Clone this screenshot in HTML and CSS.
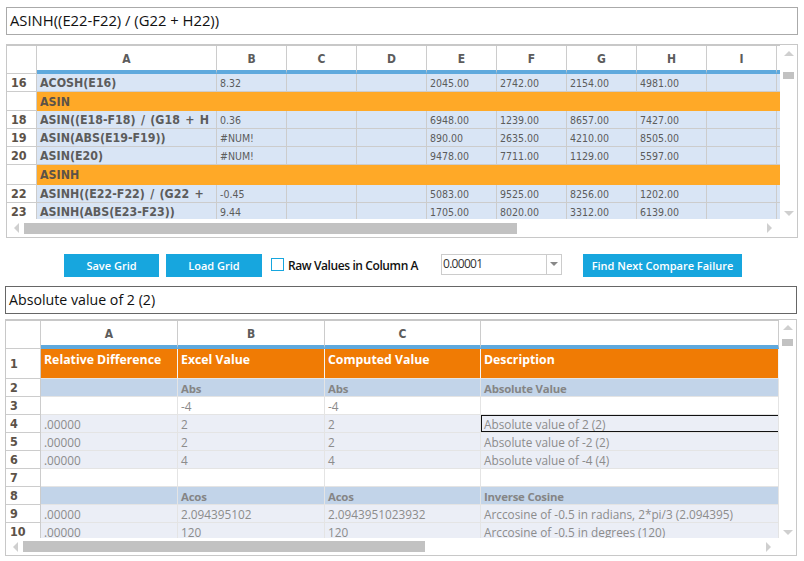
FILE: index.html
```html
<!DOCTYPE html>
<html>
<head>
    <meta charset="UTF-8">
    <title>Compare Grid</title>
    <link rel="stylesheet" href="styles.css">
</head>
<body>
    <div class="page">
        <div class="formula formula-top">ASINH((E22-F22) / (G22 + H22))</div>

        <div class="grid grid-top">
            <div class="view">
                <table class="sheet sheet-top">
                    <colgroup>
                        <col class="c-head"><col class="c-a"><col class="c-n"><col class="c-n"><col class="c-n"><col class="c-n"><col class="c-n"><col class="c-n"><col class="c-n"><col class="c-n"><col class="c-n">
                    </colgroup>
                    <thead>
                        <tr><th class="corner"></th><th>A</th><th>B</th><th>C</th><th>D</th><th>E</th><th>F</th><th>G</th><th>H</th><th>I</th><th></th></tr>
                    </thead>
                    <tbody>
                        <tr class="row first"><td class="num">16</td><td class="name"><span>ACOSH(E16)</span></td><td>8.32</td><td></td><td></td><td>2045.00</td><td>2742.00</td><td>2154.00</td><td>4981.00</td><td></td><td></td></tr>
                        <tr class="section"><td class="num"></td><td colspan="10">ASIN</td></tr>
                        <tr class="row"><td class="num">18</td><td class="name"><span>ASIN((E18-F18) / (G18 + H</span></td><td>0.36</td><td></td><td></td><td>6948.00</td><td>1239.00</td><td>8657.00</td><td>7427.00</td><td></td><td></td></tr>
                        <tr class="row"><td class="num">19</td><td class="name"><span>ASIN(ABS(E19-F19))</span></td><td>#NUM!</td><td></td><td></td><td>890.00</td><td>2635.00</td><td>4210.00</td><td>8505.00</td><td></td><td></td></tr>
                        <tr class="row"><td class="num">20</td><td class="name"><span>ASIN(E20)</span></td><td>#NUM!</td><td></td><td></td><td>9478.00</td><td>7711.00</td><td>1129.00</td><td>5597.00</td><td></td><td></td></tr>
                        <tr class="section tall"><td class="num"></td><td colspan="10">ASINH</td></tr>
                        <tr class="row"><td class="num">22</td><td class="name"><span>ASINH((E22-F22) / (G22 +</span></td><td>-0.45</td><td></td><td></td><td>5083.00</td><td>9525.00</td><td>8256.00</td><td>1202.00</td><td></td><td></td></tr>
                        <tr class="row"><td class="num">23</td><td class="name"><span>ASINH(ABS(E23-F23))</span></td><td>9.44</td><td></td><td></td><td>1705.00</td><td>8020.00</td><td>3312.00</td><td>6139.00</td><td></td><td></td></tr>
                    </tbody>
                </table>
            </div>
            <div class="vbar">
                <i class="arrow up"></i>
                <i class="vthumb"></i>
                <i class="arrow down"></i>
            </div>
            <div class="hbar">
                <i class="arrow left"></i>
                <i class="hthumb"></i>
                <i class="arrow right"></i>
            </div>
            <div class="bar-corner"></div>
        </div>

        <div class="toolbar">
            <button class="btn btn-save">Save Grid</button>
            <button class="btn btn-load">Load Grid</button>
            <label class="check"><i class="box"></i>Raw Values in Column A</label>
            <div class="combo">
                <span class="combo-text">0.00001</span>
                <span class="combo-btn"><i class="arrow down"></i></span>
            </div>
            <button class="btn btn-find">Find Next Compare Failure</button>
        </div>

        <div class="formula formula-bottom">Absolute value of 2 (2)</div>

        <div class="grid grid-bottom">
            <div class="view">
                <table class="sheet sheet-bottom">
                    <colgroup>
                        <col class="d-head"><col class="d-a"><col class="d-b"><col class="d-c"><col class="d-d">
                    </colgroup>
                    <thead>
                        <tr><th class="corner"></th><th>A</th><th>B</th><th>C</th><th></th></tr>
                    </thead>
                    <tbody>
                        <tr class="title"><td class="num">1</td><td>Relative Difference</td><td>Excel Value</td><td>Computed Value</td><td>Description</td></tr>
                        <tr class="group"><td class="num">2</td><td></td><td>Abs</td><td>Abs</td><td>Absolute Value</td></tr>
                        <tr class="plain"><td class="num">3</td><td></td><td>-4</td><td>-4</td><td></td></tr>
                        <tr class="data"><td class="num">4</td><td>.00000</td><td>2</td><td>2</td><td class="active">Absolute value of 2 (2)</td></tr>
                        <tr class="data"><td class="num">5</td><td>.00000</td><td>2</td><td>2</td><td>Absolute value of -2 (2)</td></tr>
                        <tr class="data"><td class="num">6</td><td>.00000</td><td>4</td><td>4</td><td>Absolute value of -4 (4)</td></tr>
                        <tr class="plain"><td class="num">7</td><td></td><td></td><td></td><td></td></tr>
                        <tr class="group"><td class="num">8</td><td></td><td>Acos</td><td>Acos</td><td>Inverse Cosine</td></tr>
                        <tr class="data"><td class="num">9</td><td>.00000</td><td>2.094395102</td><td>2.0943951023932</td><td>Arccosine of -0.5 in radians, 2*pi/3 (2.094395)</td></tr>
                        <tr class="data"><td class="num">10</td><td>.00000</td><td>120</td><td>120</td><td>Arccosine of -0.5 in degrees (120)</td></tr>
                    </tbody>
                </table>
            </div>
            <div class="vbar">
                <i class="arrow up"></i>
                <i class="vthumb"></i>
                <i class="arrow down"></i>
            </div>
            <div class="hbar">
                <i class="arrow left"></i>
                <i class="hthumb"></i>
                <i class="arrow right"></i>
            </div>
            <div class="bar-corner"></div>
        </div>
    </div>
</body>
</html>
```

FILE: styles.css
```css
* {
    box-sizing: border-box;
}
html, body {
    margin: 0;
    height: 100%;
    background: white;
}
body {
    font-family: "Open Sans", "Noto Sans", sans-serif;
    color: #222;
}
.page {
    width: 804px;
    padding-top: 7px;
}
.formula {
    height: 28px;
    line-height: 25px;
    padding-left: 3px;
    background: white;
    color: #111;
    white-space: nowrap;
}
.formula-top {
    margin-left: 6px;
    width: 792px;
    border: 1px solid #aaa;
    font-size: 14.8px;
}
.formula-bottom {
    margin-left: 5px;
    margin-top: 9px;
    width: 792px;
    border: 1px solid #666;
    font-size: 14.2px;
}

/* grids */
.grid {
    display: grid;
    background: white;
    border: 1px solid #c8c8c8;
}
.grid-top {
    margin-left: 6px;
    margin-top: 9px;
    width: 792px;
    height: 194px;
    grid-template-columns: 773px 17px;
    grid-template-rows: 174px 18px;
}
.grid-bottom {
    margin-left: 5px;
    margin-top: 5px;
    width: 792px;
    height: 237px;
    grid-template-columns: 773px 17px;
    grid-template-rows: 218px 17px;
}
.view {
    overflow: hidden;
    border-top: 1px solid #c8c8c8;
}
.sheet {
    border-collapse: separate;
    border-spacing: 0;
    table-layout: fixed;
    width: 100%;
}
.sheet th, .sheet td {
    padding: 0;
    overflow: hidden;
    white-space: nowrap;
}
.sheet th {
    background: white;
    color: #5c5c5c;
    text-align: center;
    border-right: 1px solid #ccc;
    border-bottom: 4px solid #5fa9dd;
    padding-top: 1px;
    font-family: "DejaVu Sans Condensed", sans-serif;
    font-weight: bold;
    font-size: 12px;
}
.sheet th.corner {
    border-bottom: 1px solid #ccc;
}
.num {
    background: white;
    color: #5c5248;
    font-family: "DejaVu Sans Condensed", sans-serif;
    font-weight: bold;
    font-size: 12.5px;
    padding-left: 4px !important;
    border-right: 1px solid #ccc;
    border-bottom: 1px solid #ccc;
}

/* top sheet */
.sheet-top {
    width: 773px;
}
.c-head { width: 30px; }
.c-a { width: 180px; }
.c-n { width: 70px; }
.sheet-top th {
    height: 28px;
}
.sheet-top .row td {
    height: 18px;
    border-right: 1px solid #ccc;
    border-bottom: 1px solid #ccc;
    background: #d9e5f5;
    font-family: "DejaVu Sans Condensed", sans-serif;
    font-size: 10.5px;
    color: #5c5c5c;
    padding-left: 3px;
    padding-top: 1px;
    line-height: 14px;
}
.sheet-top .first td {
    padding-top: 0;
}
.sheet-top .row td.num {
    background: white;
    color: #5c5248;
    font-size: 12.5px;
    padding-left: 4px;
}
.sheet-top .row td.name {
    font-size: 12.3px;
    font-weight: bold;
    word-spacing: 1.5px;
}
.sheet-top .section td {
    height: 19px;
    background: #ffa927;
    color: #5c5248;
    font-family: "DejaVu Sans Condensed", sans-serif;
    font-size: 12.3px;
    font-weight: bold;
    padding-left: 3px;
}
.sheet-top .section.tall td {
    height: 20px;
}
.sheet-top .section td.num {
    background: white;
    padding-left: 4px;
}

/* bottom sheet */
.sheet-bottom {
    width: 773px;
}
.d-head { width: 35px; }
.d-a { width: 137px; }
.d-b { width: 147px; }
.d-c { width: 156px; }
.d-d { width: 298px; }
.sheet-bottom th {
    height: 28px;
    padding-top: 2px;
}
.sheet-bottom td {
    height: 18px;
    padding-left: 3px;
    padding-top: 1px;
    font-size: 11.8px;
    line-height: 15px;
    color: #8c8c8c;
    border-right: 1px solid #e4e4e4;
    border-bottom: 1px solid #e4e4e4;
}
.sheet-bottom .title td {
    height: 30px;
    background: #f07b04;
    color: white;
    font-weight: bold;
    font-size: 12.3px;
    padding-top: 0;
    padding-bottom: 9px;
    border-right: 1px solid #f4f4f4;
    border-bottom: 1px solid #e4e4e4;
}
.sheet-bottom .group td {
    background: #c2d4e9;
    font-weight: 700;
    font-size: 11.4px;
    letter-spacing: -0.2px;
    color: #858585;
}
.sheet-bottom .data td {
    background: #ebeef6;
}
.sheet-bottom td.num,
.sheet-bottom .title td.num,
.sheet-bottom .group td.num,
.sheet-bottom .data td.num {
    background: white;
    color: #5c5248;
    font-family: "DejaVu Sans Condensed", sans-serif;
    font-weight: bold;
    font-size: 12.5px;
    letter-spacing: 0;
    padding-top: 0;
    padding-bottom: 0;
    border-right: 1px solid #ccc;
    border-bottom: 1px solid #ccc;
}
.sheet-bottom td.active {
    box-shadow: inset 1px 1px 0 #111, inset 0 -1px 0 #111;
}

/* scrollbars */
.vbar {
    display: flex;
    flex-direction: column;
    align-items: center;
    padding: 6px 0 3px;
}
.hbar {
    display: flex;
    align-items: center;
    padding: 0 8px 0 7px;
}
.vthumb {
    width: 11px;
    height: 7px;
    margin-top: 16px;
    background: #c2c2c2;
}
.hthumb {
    height: 11px;
    margin-left: 5px;
    background: #c2c2c2;
}
.grid-top .hthumb { width: 493px; }
.grid-bottom .hthumb { width: 402px; }
.grid-bottom .vbar { padding-top: 5px; }
.grid-bottom .vthumb { margin-top: 9px; }
.hbar .right {
    margin-left: auto;
}
.vbar .down {
    margin-top: auto;
}
.arrow {
    display: block;
    width: 0;
    height: 0;
    border-style: solid;
    border-color: transparent;
}
.arrow.up {
    border-width: 0 5px 5px 5px;
    border-bottom-color: #cfcfcf;
}
.arrow.down {
    border-width: 5px 5px 0 5px;
    border-top-color: #cfcfcf;
}
.arrow.left {
    border-width: 5px 5px 5px 0;
    border-right-color: #cfcfcf;
}
.arrow.right {
    border-width: 5px 0 5px 5px;
    border-left-color: #cfcfcf;
}

/* toolbar */
.toolbar {
    display: flex;
    align-items: flex-start;
    height: 23px;
    margin-top: 16px;
    padding-left: 64px;
}
.btn {
    height: 23px;
    border: none;
    padding: 0;
    background: #17a6de;
    color: white;
    font-family: "Open Sans", sans-serif;
    font-size: 11px;
    font-weight: 600;
}
.btn-save { width: 95px; }
.btn-load { width: 96px; margin-left: 7px; }
.btn-find { width: 159px; margin-left: 21px; }
.check {
    display: flex;
    align-items: center;
    height: 22px;
    width: 170px;
    margin-left: 9px;
    font-size: 12px;
    font-weight: 600;
    letter-spacing: -0.4px;
    color: #111;
    white-space: nowrap;
}
.box {
    width: 13px;
    height: 13px;
    margin-right: 4px;
    margin-top: -2px;
    border: 1px solid #17a6de;
    background: white;
}
.combo {
    display: flex;
    width: 121px;
    height: 21px;
    border: 1px solid #ccc;
    font-size: 12px;
    letter-spacing: -0.7px;
    color: #333;
}
.combo-text {
    flex: 1;
    padding-left: 1px;
    line-height: 18px;
}
.combo-btn {
    display: flex;
    align-items: center;
    justify-content: center;
    width: 15px;
    border-left: 1px solid #ccc;
}
.combo-btn .arrow {
    border-width: 4px 4px 0 4px;
    border-top-color: #888;
    margin-top: -2px;
}
```
